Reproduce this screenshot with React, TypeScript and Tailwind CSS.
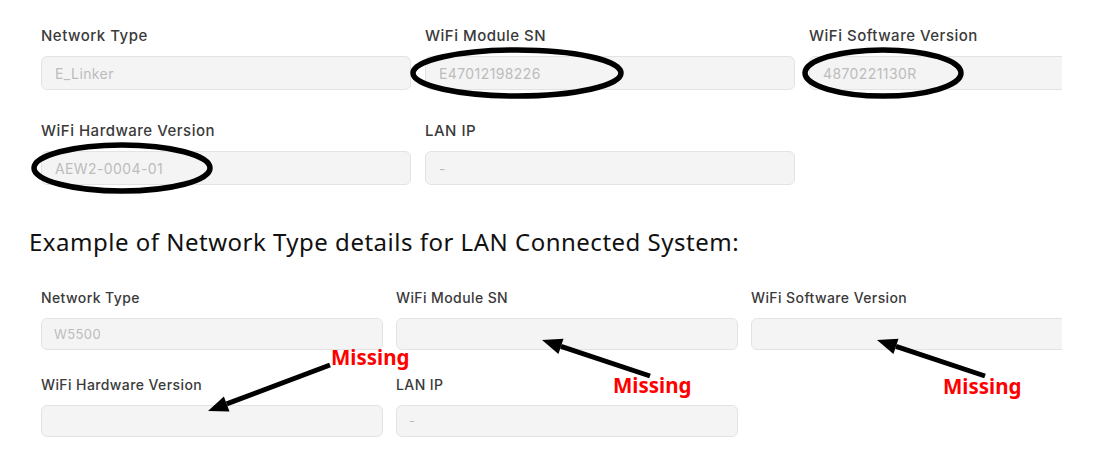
import { FC } from "react";

interface FieldProps { label: string, value: string, size: "lg" | "sm" }
const Field: FC<FieldProps> = ({ label, value, size }) => {
  const big = size === "lg";
  return (
    <div className="flex flex-col">
      <label className={big
        ? "h-5 leading-5 text-[15px] tracking-[0.5px] font-medium text-[#3a3a3a] whitespace-nowrap"
        : "h-5 leading-5 text-[14px] tracking-[0.4px] font-medium text-[#3a3a3a] whitespace-nowrap"}>
        {label}
      </label>
      <input
        readOnly
        value={value}
        className={big
          ? "mt-[10px] h-[34px] w-full rounded-[6px] border border-[#e3e3e3] bg-[#f4f4f4] px-[13px] text-[14px] tracking-[0.4px] text-[#bcbcbc] outline-none"
          : "mt-[10px] h-[32px] w-full rounded-[6px] border border-[#e3e3e3] bg-[#f4f4f4] px-[12px] text-[13px] tracking-[0.4px] text-[#bcbcbc] outline-none"}
      />
    </div>
  );
};

const lanFields = [
  { label: "Network Type", value: "E_Linker" },
  { label: "WiFi Module SN", value: "E47012198226" },
  { label: "WiFi Software Version", value: "4870221130R" },
  { label: "WiFi Hardware Version", value: "AEW2-0004-01" },
  { label: "LAN IP", value: "-" },
];

const w5500Fields = [
  { label: "Network Type", value: "W5500" },
  { label: "WiFi Module SN", value: "" },
  { label: "WiFi Software Version", value: "" },
  { label: "WiFi Hardware Version", value: "" },
  { label: "LAN IP", value: "-" },
];

const Arrow: FC<{ x1: number, y1: number, x2: number, y2: number }> = ({ x1, y1, x2, y2 }) => {
  const a = Math.atan2(y2 - y1, x2 - x1);
  const len = 20, half = 8;
  const bx = x2 - len * Math.cos(a), by = y2 - len * Math.sin(a);
  const px = -Math.sin(a) * half, py = Math.cos(a) * half;
  return (
    <g>
      <line x1={x1} y1={y1} x2={bx} y2={by} stroke="#000" strokeWidth={5} />
      <polygon points={`${x2},${y2} ${bx + px},${by + py} ${bx - px},${by - py}`} fill="#000" />
    </g>
  );
};

export default function App() {
  return (
    <div className="relative w-[1101px] h-[465px] overflow-hidden bg-white" style={{ fontFamily: "Inter, 'Noto Sans', sans-serif" }}>
      <div className="pl-[41px] pt-[26px] w-[1062px] overflow-hidden">
        <div className="grid grid-cols-[370px_370px_370px] gap-x-[14px] gap-y-[31px] w-[1138px]">
          {lanFields.map(f => <Field key={f.label} label={f.label} value={f.value} size="lg" />)}
        </div>
      </div>

      <h2 className="mt-[42px] pl-[29px] text-[24px] leading-[30px] tracking-[0.5px] text-[#111] font-['Noto_Sans',sans-serif] whitespace-nowrap">
        Example of Network Type details for LAN Connected System:
      </h2>

      <div className="pl-[41px] pt-[31px] w-[1062px] overflow-hidden">
        <div className="grid grid-cols-[342px_342px_342px] gap-x-[13px] gap-y-[25px] w-[1052px]">
          {w5500Fields.map(f => <Field key={f.label} label={f.label} value={f.value} size="sm" />)}
        </div>
      </div>

      <svg className="absolute inset-0 pointer-events-none" width={1101} height={465}>
        <ellipse cx={517} cy={73} rx={104} ry={23} fill="none" stroke="#000" strokeWidth={5.5} />
        <ellipse cx={883} cy={73} rx={78} ry={23} fill="none" stroke="#000" strokeWidth={5.5} />
        <ellipse cx={122} cy={168} rx={88} ry={23} fill="none" stroke="#000" strokeWidth={5.5} />
        <Arrow x1={330} y1={365} x2={208} y2={411} />
        <Arrow x1={650} y1={376} x2={542} y2={340} />
        <Arrow x1={985} y1={376} x2={877} y2={340} />
      </svg>

      <span className="absolute left-[331px] top-[345px] text-[20.5px] leading-6 font-bold text-[#f00] font-['Noto_Sans',sans-serif]">Missing</span>
      <span className="absolute left-[613px] top-[373px] text-[20.5px] leading-6 font-bold text-[#f00] font-['Noto_Sans',sans-serif]">Missing</span>
      <span className="absolute left-[943px] top-[374px] text-[20.5px] leading-6 font-bold text-[#f00] font-['Noto_Sans',sans-serif]">Missing</span>
    </div>
  );
}
